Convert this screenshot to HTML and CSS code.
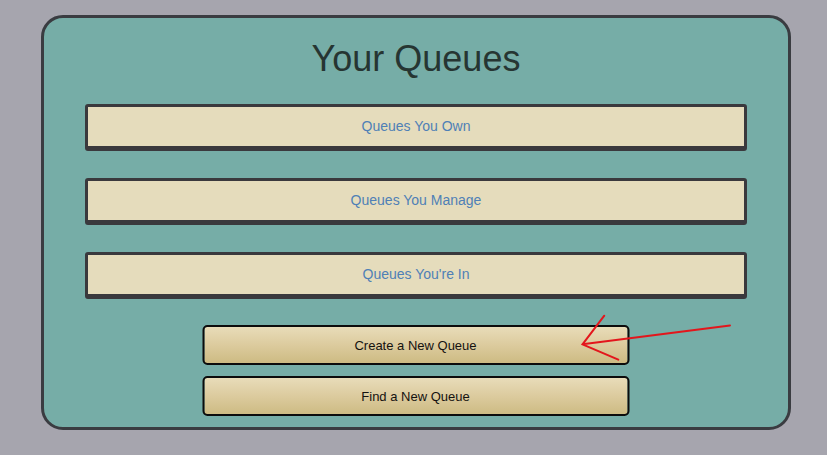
FILE: index.html
```html
<!DOCTYPE html>
<html lang="en">
<head>
<meta charset="utf-8">
<title>Your Queues</title>
<link rel="stylesheet" href="styles.css">
</head>
<body>
<main class="panel">
  <h1 class="title">Your Queues</h1>
  <ul class="queue-list">
    <li class="queue-bar"><a class="queue-link" href="#">Queues You Own</a></li>
    <li class="queue-bar"><a class="queue-link" href="#">Queues You Manage</a></li>
    <li class="queue-bar"><a class="queue-link" href="#">Queues You're In</a></li>
  </ul>
  <div class="actions">
    <button class="action-btn" type="button">Create a New Queue</button>
    <button class="action-btn" type="button">Find a New Queue</button>
  </div>
</main>
<svg class="annotation" width="827" height="455" viewBox="0 0 827 455" aria-hidden="true">
  <path d="M730 325.5 L582.5 344.3 M604.3 315.7 L582.5 344.3 L618.3 359.7" fill="none" stroke="#e3161c" stroke-width="2" stroke-linecap="round" stroke-linejoin="miter"/>
</svg>
</body>
</html>
```
FILE: styles.css
```css
html, body {
  margin: 0;
  padding: 0;
}
body {
  background: #a6a5ae;
  font-family: "Liberation Sans", Arial, sans-serif;
  width: 827px;
  height: 455px;
  position: relative;
  overflow: hidden;
}
.panel {
  box-sizing: border-box;
  width: 750px;
  margin: 15px 0 0 41px;
  border: 3px solid #3a3c41;
  border-radius: 22px;
  background: #76ada7;
  padding: 21px 0 11px;
}
.title {
  margin: 0;
  font-weight: normal;
  font-size: 36px;
  line-height: 40px;
  text-align: center;
  color: #263532;
}
.queue-list {
  list-style: none;
  margin: 25px 0 0;
  padding: 0 41px;
  display: flex;
  flex-direction: column;
  gap: 27px;
}
.queue-bar {
  box-sizing: border-box;
  height: 47px;
  border: 3px solid #3a393d;
  border-bottom-width: 5px;
  border-radius: 3px;
  background: #e5dcbc;
  display: flex;
  align-items: center;
  justify-content: center;
}
.queue-link {
  color: #4f80b6;
  text-decoration: none;
  font-size: 14px;
  line-height: 39px;
}
.actions {
  margin-top: 26px;
  display: flex;
  flex-direction: column;
  align-items: center;
  gap: 11px;
}
.action-btn {
  box-sizing: border-box;
  width: 427px;
  height: 40px;
  border: 2px solid #0c0c0c;
  border-radius: 5px;
  background: linear-gradient(to bottom, #e8dcb9 0%, #dccb9e 50%, #cdbb83 100%);
  font-family: "Liberation Sans", Arial, sans-serif;
  font-size: 13px;
  color: #151210;
  padding: 0;
  margin: 0;
  transform: translateX(-0.5px);
}
.annotation {
  position: absolute;
  left: 0;
  top: 0;
  pointer-events: none;
}
```
